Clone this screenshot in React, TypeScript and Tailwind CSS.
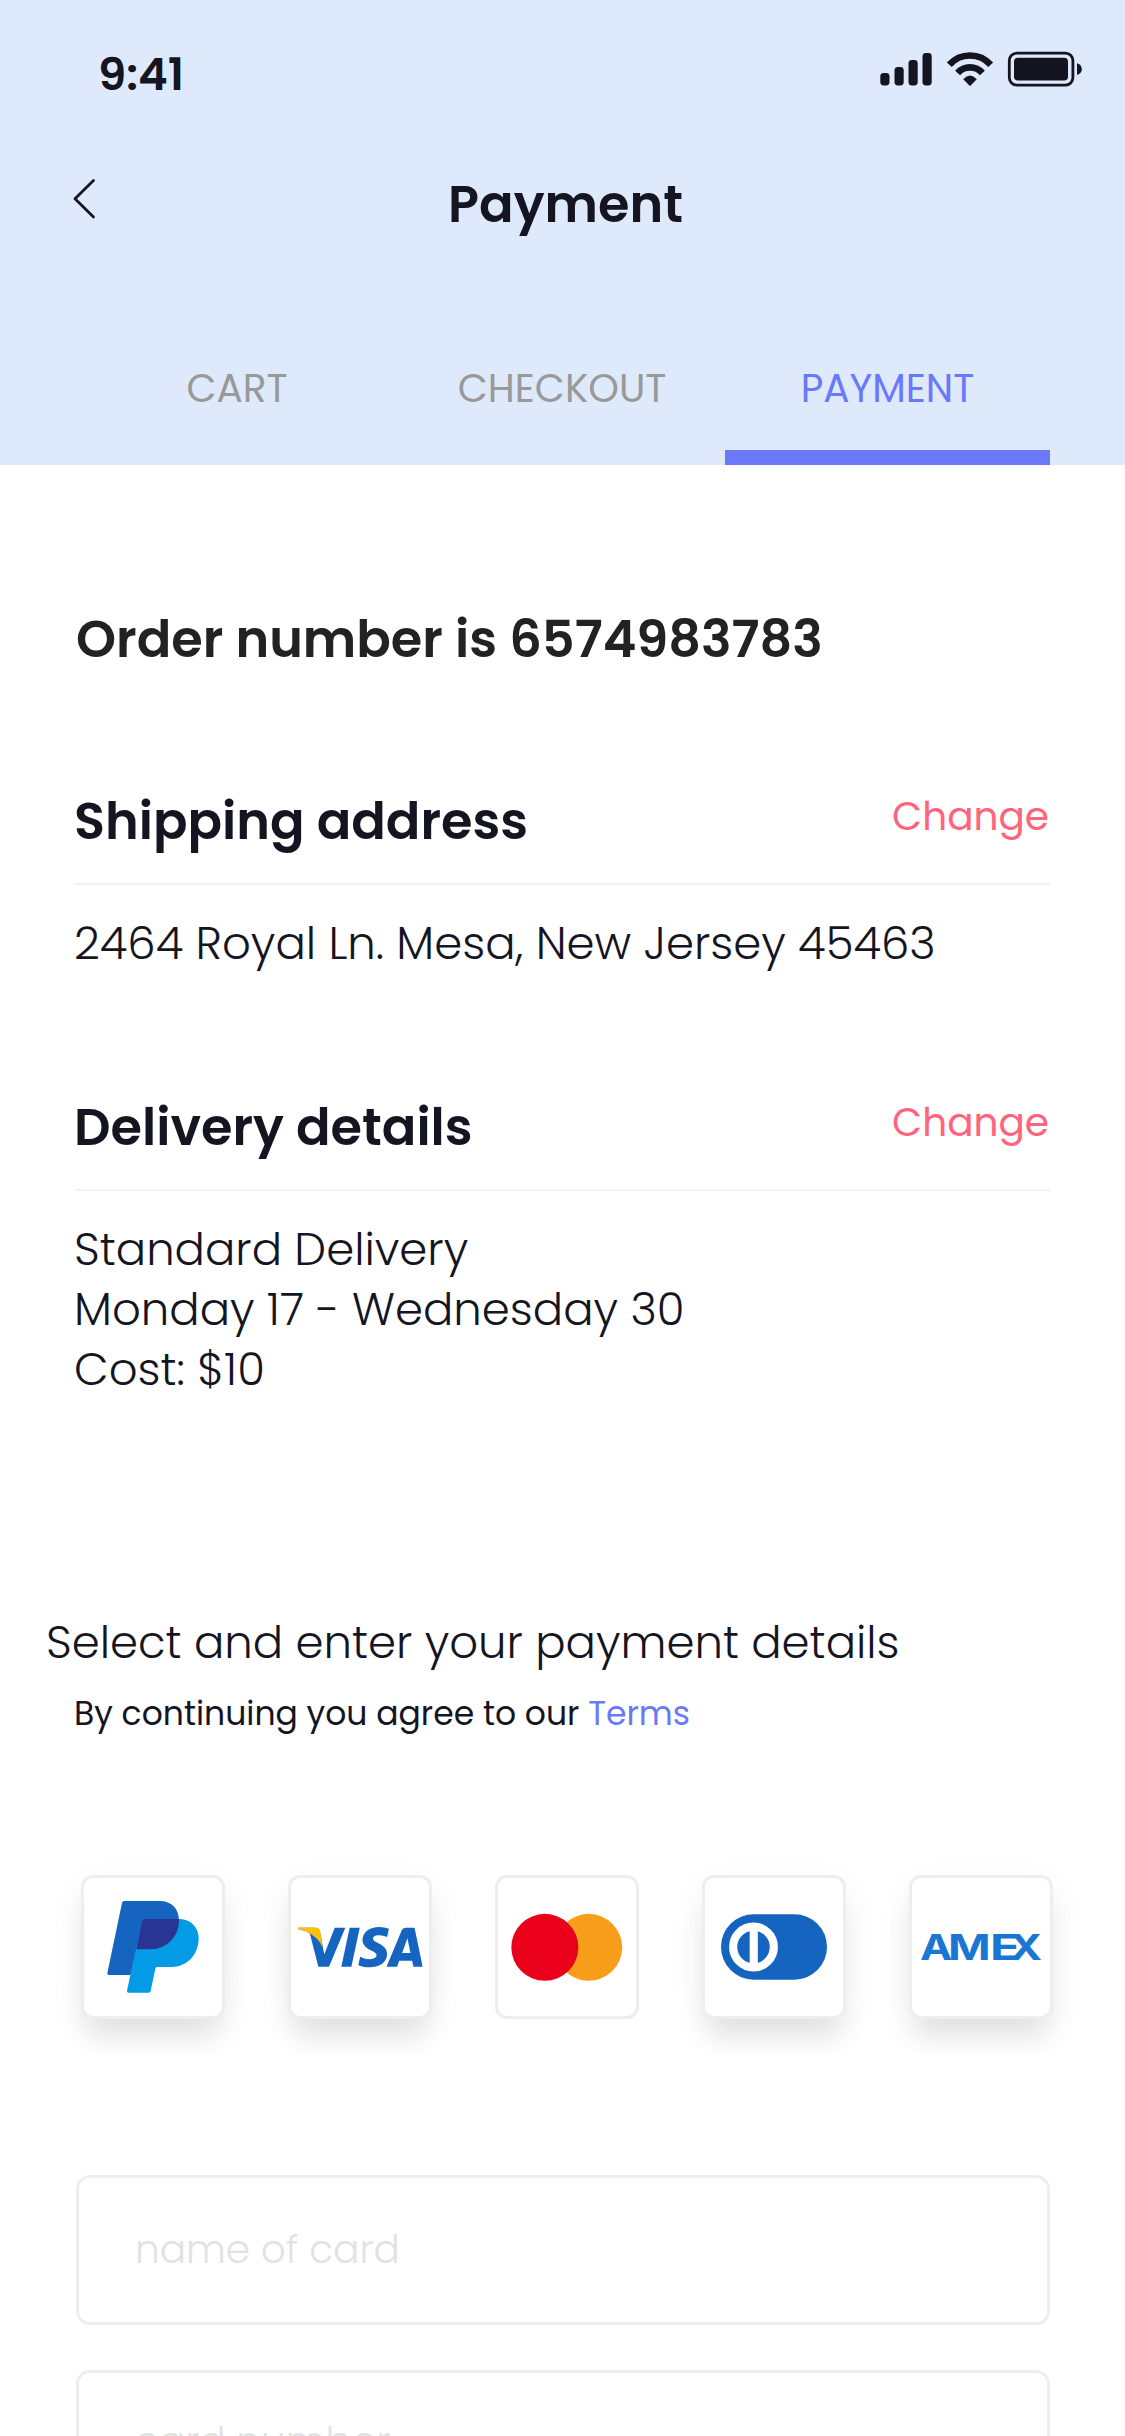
import React from "react";
import { SiVisa } from "react-icons/si";

function Signal() {
  return (
    <svg className="h-[34px] w-[52px]" viewBox="0 0 52 34" fill="#151522">
      <rect x="0.3" y="21" width="9.2" height="12.5" rx="3.4" />
      <rect x="14.5" y="15" width="9.2" height="18.5" rx="3.4" />
      <rect x="28.5" y="8" width="9.2" height="25.5" rx="3.4" />
      <rect x="42.5" y="1" width="9.2" height="32.5" rx="3.4" />
    </svg>
  );
}

function Wifi() {
  return (
    <svg className="h-[36px] w-[48px]" viewBox="946 51 48 36" fill="none" stroke="#151522">
      <path d="M949.3 64.8A27.6 27.6 0 0 1 990.7 64.8" strokeWidth="6.6" />
      <path d="M957.6 73A16.5 16.5 0 0 1 982.4 73" strokeWidth="6.6" />
      <path d="M963.2 79.2Q970 71.8 976.8 79.2L970.6 85.6Q970 86.2 969.4 85.6Z" fill="#151522" stroke="none" />
    </svg>
  );
}

function Battery() {
  return (
    <svg className="h-[36px] w-[76px]" viewBox="1007 51 76 36">
      <rect x="1009.3" y="53.1" width="63.6" height="32" rx="7.5" fill="none" stroke="#151522" strokeWidth="2.8" />
      <rect x="1014" y="57.8" width="54" height="22.8" rx="4" fill="#151522" />
      <path d="M1077 63.3Q1081.8 65 1081.8 69.2T1077 75Z" fill="#151522" />
    </svg>
  );
}

function PaypalLogo() {
  return (
    <svg className="size-full" viewBox="72 84 414 414">
      <path fill="#1565C0" d="M193 153H300C334 153 357 176 357 211L272 298L230 300L212 375H147Q141 375 142 369L186 159Q187 153 193 153Z" />
      <path fill="#039BE5" d="M252 207H356C392 207 416 231 416 264C416 315 380 351 335 351H291Q287 351 286 356L272 423Q271 428 266 428H206Q200 428 201 422L246 212Q247 207 252 207Z" />
      <path fill="#283593" d="M252 207H357V211C357 260 320 298 272 298H229L246 212Q247 207 252 207Z" />
    </svg>
  );
}

function VisaLogo() {
  return (
    <svg className="size-full" viewBox="693 84 414 414">
      <SiVisa x="714" y="104.5" size={374} color="#1565C0" />
      <path fill="#FFC107" stroke="#FFC107" strokeWidth="1" d="M714 233.2H766.4Q778 233.5 779.9 243.6L787 290C780 272 765 258 746 248.5Q733 240 713.8 236.4Z" />
    </svg>
  );
}

function MastercardLogo() {
  return (
    <svg className="size-full" viewBox="114 84 414 414">
      <circle cx="386" cy="292" r="100.5" fill="#F79E1B" />
      <circle cx="254.5" cy="292" r="100.5" fill="#EB001B" />
    </svg>
  );
}

function DinersLogo() {
  return (
    <svg className="size-full" viewBox="735 84 414 414">
      <rect x="783" y="192.5" width="318" height="196.5" rx="98" fill="#1565C0" />
      <circle cx="880.5" cy="291" r="61" fill="none" stroke="#fff" strokeWidth="24.5" />
      <rect x="869" y="235" width="24.5" height="112" fill="#fff" />
    </svg>
  );
}

function AmexLogo() {
  return (
    <svg className="size-full" viewBox="216 84 414 414">
      <g className="font-[Inter] text-[107px] font-bold" fill="#1976D2">
        <text x="240" y="330" textLength="97" lengthAdjust="spacingAndGlyphs">A</text>
        <text x="324" y="330" textLength="128" lengthAdjust="spacingAndGlyphs">M</text>
        <text x="450" y="330" textLength="90" lengthAdjust="spacingAndGlyphs">E</text>
        <text x="509" y="330" textLength="97" lengthAdjust="spacingAndGlyphs">X</text>
      </g>
    </svg>
  );
}

function SectionHeader({ title }: { title: string }) {
  return (
    <div className="flex h-[102px] items-start justify-between border-b-2 border-[#f2f2f2]">
      <h2 className="-ml-px text-[51px] leading-[76px] font-semibold">{title}</h2>
      <a className="mt-[5px] mr-px text-[39px] leading-[58px] font-normal text-[#FF647C]">Change</a>
    </div>
  );
}

const raised =
  "shadow-[0_23px_28px_-6px_rgba(21,21,40,0.1),0_10px_44px_rgba(21,21,40,0.045)]";

function Method({ children, flat = false }: { children: React.ReactNode; flat?: boolean }) {
  return (
    <button className={`size-36 shrink-0 rounded-xl border-3 border-[#eeeeee] bg-white ${flat ? "" : raised}`}>
      {children}
    </button>
  );
}

export default function App() {
  return (
    <div className="h-[2436px] w-[1125px] overflow-hidden bg-white font-[Poppins,Inter,sans-serif] text-[#151522]">
      <header className="flex h-[465px] flex-col bg-[#DEE9FC]">
        <div className="flex h-[105px] shrink-0 items-start justify-between pt-[45px] pr-[42px] pl-[98px]">
          <span className="text-[45px] leading-[60px] font-semibold">9:41</span>
          <div className="flex items-start pt-[6px]">
            <div className="mt-px mr-[14px]"><Signal /></div>
            <div className="mr-[13px]"><Wifi /></div>
            <Battery />
          </div>
        </div>
        <div className="mt-[61px] flex h-[76px] items-start px-[72px]">
          <svg className="mt-3 h-[42px] w-6" viewBox="0 0 24 42" fill="none" stroke="#151522" strokeWidth="2.8" strokeLinecap="round" strokeLinejoin="round">
            <path d="M21.5 2.5L3 20.8L21.5 39" />
          </svg>
          <h1 className="flex-1 pr-[18px] text-center text-[51px] leading-[76px] font-semibold">Payment</h1>
        </div>
        <nav className="mt-auto grid h-[105px] grid-cols-3 px-[75px] text-center text-[39px] leading-[58px] text-[#999999]">
          <span className="-ml-px">CART</span>
          <span className="-ml-px">CHECKOUT</span>
          <span className="border-b-15 border-[#6979F8] text-[#6979F8]">PAYMENT</span>
        </nav>
      </header>

      <main className="px-[75px] pt-[136px] text-[45px] leading-[60px] font-light">
        <p className="ml-px text-[51px] leading-[76px] font-semibold text-[#222222]">Order number is 6574983783</p>

        <section className="mt-[106px]">
          <SectionHeader title="Shipping address" />
          <p className="mt-[29px] -ml-px">2464 Royal Ln. Mesa, New Jersey 45463</p>
        </section>

        <section className="mt-[115px]">
          <SectionHeader title="Delivery details" />
          <p className="mt-[29px] -ml-px">
            Standard Delivery
            <br />
            Monday 17 - Wednesday 30
            <br />
            Cost: $10
          </p>
        </section>

        <p className="mt-[213px] -ml-[29px]">Select and enter your payment details</p>
        <p className="mt-4 -ml-px text-[33px] leading-[50px] font-normal">
          By continuing you agree to our <a className="text-[#6979F8]">Terms</a>
        </p>

        <div className="mt-[136px] ml-[6px] flex gap-[63px]">
          <Method><PaypalLogo /></Method>
          <Method><VisaLogo /></Method>
          <Method flat><MastercardLogo /></Method>
          <Method><DinersLogo /></Method>
          <Method><AmexLogo /></Method>
        </div>

        <form className="mt-[156px] ml-px flex flex-col gap-[45px] text-[39px]">
          <input
            className="h-[150px] rounded-[14px] border-3 border-[#eeeeee] px-[56px] pb-[2px] placeholder:text-[#e2e2e2]"
            placeholder="name of card"
          />
          <input
            className="h-[150px] rounded-[14px] border-3 border-[#eeeeee] px-[56px] pb-[8px] placeholder:text-[#e2e2e2]"
            placeholder="card number"
          />
        </form>
      </main>
    </div>
  );
}
